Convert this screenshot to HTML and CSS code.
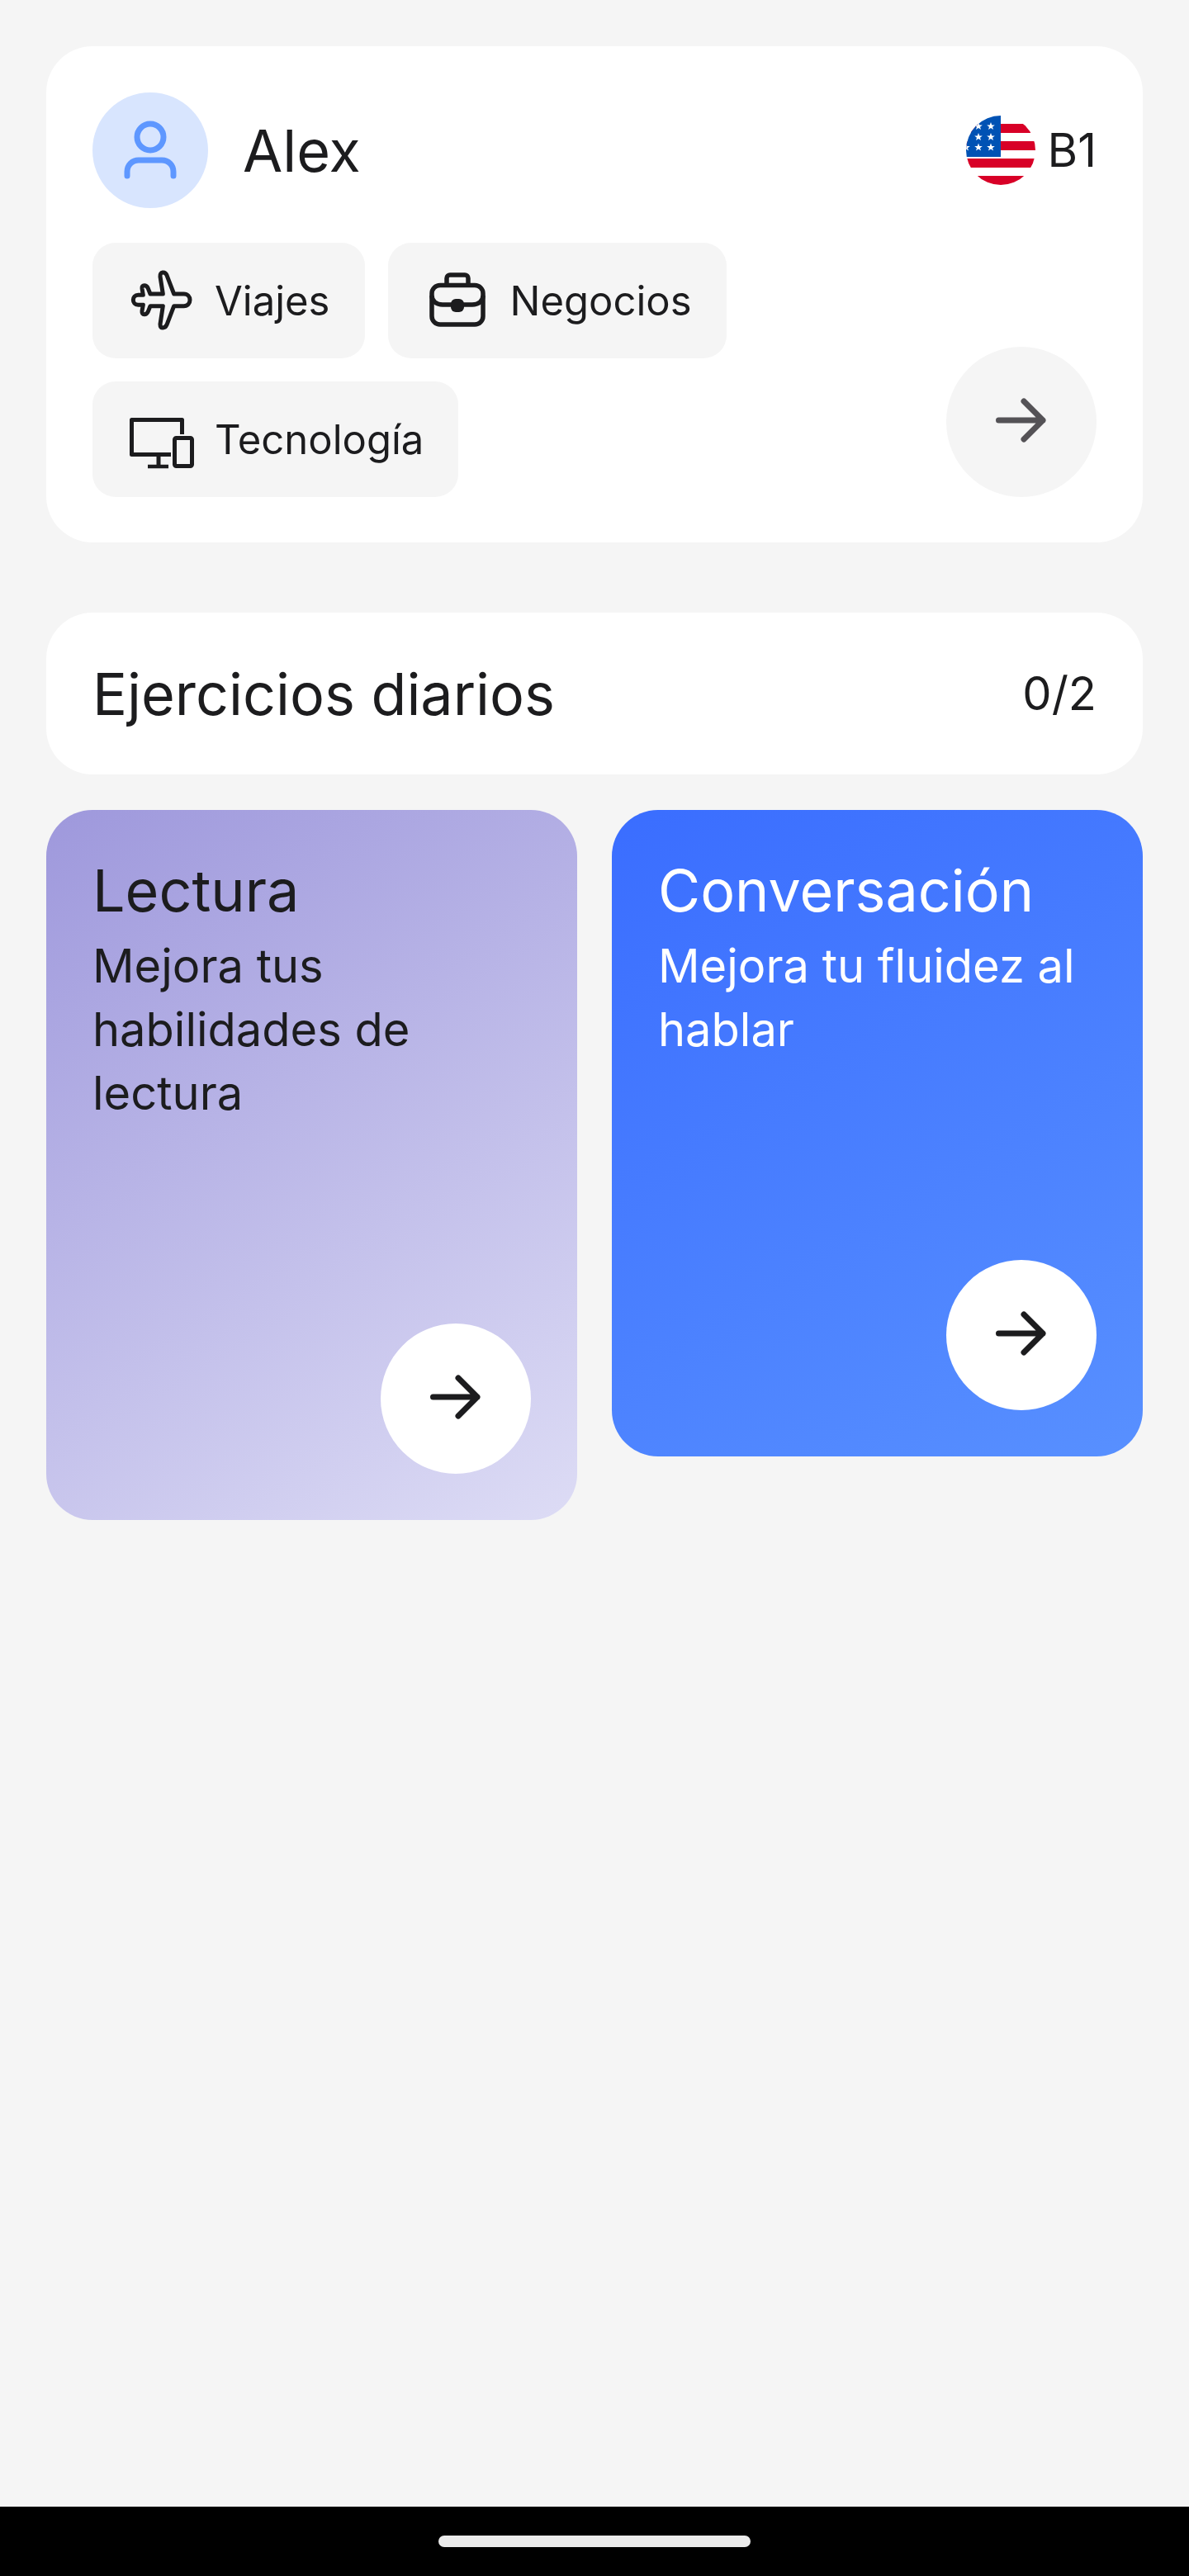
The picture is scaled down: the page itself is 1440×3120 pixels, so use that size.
FILE: index.html
```html
<!DOCTYPE html>
<html lang="es">
<head>
    <meta charset="UTF-8">
    <meta name="viewport" content="width=device-width, initial-scale=1.0">
    <title>Ejercicios diarios</title>
    <link rel="stylesheet" href="styles.css">
</head>
<body>
    <main class="content">
        <section class="card profile">
            <div class="profile-top">
                <div class="avatar">
                    <svg class="icon" viewBox="0 0 84 84" fill="none" stroke="#5e97ff" stroke-width="7" stroke-linecap="round">
                        <circle cx="42" cy="26" r="16"/>
                        <path d="M14 73V68C14 60 20 54 28 54H56C64 54 70 60 70 68V73"/>
                    </svg>
                </div>
                <span class="name">Alex</span>
                <div class="level">
                    <svg class="flag" viewBox="0 0 84 84">
                        <defs>
                            <clipPath id="flag-clip"><circle cx="42" cy="42" r="42"/></clipPath>
                            <polygon id="star" points="0,-5 1.3,-1.6 4.8,-1.5 2,0.7 3,4.1 0,2.1 -3,4.1 -2,0.7 -4.8,-1.5 -1.3,-1.6" fill="#fff"/>
                        </defs>
                        <g clip-path="url(#flag-clip)">
                            <rect width="84" height="84" fill="#fff"/>
                            <rect y="10" width="84" height="11" fill="#d80027"/>
                            <rect y="31" width="84" height="11" fill="#d80027"/>
                            <rect y="52" width="84" height="11" fill="#d80027"/>
                            <rect y="73" width="84" height="11" fill="#d80027"/>
                            <rect width="42" height="50" fill="#0052b4"/>
                            <use href="#star" x="15" y="13"/>
                            <use href="#star" x="30" y="13"/>
                            <use href="#star" x="15" y="26"/>
                            <use href="#star" x="30" y="26"/>
                            <use href="#star" x="0" y="38.5"/>
                            <use href="#star" x="15" y="38.5"/>
                            <use href="#star" x="30" y="38.5"/>
                        </g>
                    </svg>
                    <span class="level-text">B1</span>
                </div>
            </div>
            <div class="profile-bottom">
                <div class="chips">
                    <div class="chip">
                        <svg class="icon" viewBox="198 126 252 252" fill="none" stroke="#1c1c1e" stroke-width="15" stroke-linejoin="round">
                            <path d="M398 228C412 228 420 238 420 250C420 262 412 272 398 272L362 272L336 340C330 354 312 356 312 338L322 272L276 272L268 292C262 306 244 306 246 290L250 268L232 268C208 268 208 232 232 232L250 232L246 208C244 194 262 194 268 208L276 228L322 228L312 165C310 146 330 146 336 160L362 228Z"/>
                        </svg>
                        <span>Viajes</span>
                    </div>
                    <div class="chip">
                        <svg class="icon" viewBox="0 0 84 84" fill="none" stroke="#1c1c1e" stroke-width="5.5">
                            <rect x="9" y="23.5" width="62" height="47.5" rx="10"/>
                            <path d="M27 23V15C27 12.5 29 11 31 11H49C51 11 53 12.5 53 15V23"/>
                            <path d="M9 36C9 43 15 47 22 47H58C65 47 71 43 71 36"/>
                            <rect x="32" y="40" width="16" height="16" rx="6" fill="#1c1c1e" stroke="none"/>
                        </svg>
                        <span>Negocios</span>
                    </div>
                    <div class="chip">
                        <svg class="icon" viewBox="0 0 84 84" fill="none" stroke="#1c1c1e" stroke-width="5" stroke-linejoin="round">
                            <path d="M51 60.5H3.5V18.5H64.5V36"/>
                            <path d="M36 61V73"/>
                            <path d="M23 75H48" stroke-width="4.5"/>
                            <rect x="55.5" y="40.5" width="21" height="34" rx="2"/>
                        </svg>
                        <span>Tecnología</span>
                    </div>
                </div>
                <button class="arrow-btn arrow-btn-muted">
                    <svg class="icon" viewBox="0 0 84 84" fill="none" stroke="#545256" stroke-width="7" stroke-linecap="round" stroke-linejoin="round">
                        <path d="M14.5 40H68M45 17L68 40L45 63"/>
                    </svg>
                </button>
            </div>
        </section>

        <section class="card daily">
            <h2 class="daily-title">Ejercicios diarios</h2>
            <span class="daily-count">0/2</span>
        </section>

        <div class="exercises">
            <article class="exercise exercise-reading">
                <h3 class="exercise-title">Lectura</h3>
                <p class="exercise-text">Mejora tus habilidades de lectura</p>
                <button class="arrow-btn">
                    <svg class="icon" viewBox="0 0 84 84" fill="none" stroke="#1c1c1e" stroke-width="7" stroke-linecap="round" stroke-linejoin="round">
                        <path d="M14.5 40H68M45 17L68 40L45 63"/>
                    </svg>
                </button>
            </article>
            <article class="exercise exercise-talking">
                <h3 class="exercise-title">Conversación</h3>
                <p class="exercise-text">Mejora tu fluidez al hablar</p>
                <button class="arrow-btn">
                    <svg class="icon" viewBox="0 0 84 84" fill="none" stroke="#1c1c1e" stroke-width="7" stroke-linecap="round" stroke-linejoin="round">
                        <path d="M14.5 40H68M45 17L68 40L45 63"/>
                    </svg>
                </button>
            </article>
        </div>
    </main>

    <div class="nav-bar">
        <div class="nav-handle"></div>
    </div>
</body>
</html>
```

FILE: styles.css
```css
body {
    font-family: Inter, "Liberation Sans", sans-serif;
    background-color: #f5f5f5;
    color: #1c1c1e;
    margin: 0;
    height: 3120px;
    display: flex;
    flex-direction: column;
}

.content {
    flex: 1;
    padding: 56px 56px 0;
}

.card {
    background-color: #fff;
    border-radius: 56px;
}

.icon {
    width: 84px;
    height: 84px;
    flex-shrink: 0;
}

.profile {
    padding: 56px;
    height: 601px;
    box-sizing: border-box;
}

.profile-top {
    display: flex;
    align-items: center;
}

.avatar {
    width: 140px;
    height: 140px;
    border-radius: 50%;
    background-color: #d8e5fe;
    display: flex;
    align-items: center;
    justify-content: center;
}

.name {
    font-size: 70px;
    margin-left: 42px;
    flex: 1;
}

.level {
    display: flex;
    align-items: center;
    gap: 15px;
}

.flag {
    width: 84px;
    height: 84px;
}

.level-text {
    font-size: 56px;
}

.profile-bottom {
    display: flex;
    align-items: flex-end;
    margin-top: 42px;
}

.chips {
    flex: 1;
    display: flex;
    flex-wrap: wrap;
    gap: 28px;
}

.chip {
    height: 140px;
    box-sizing: border-box;
    padding: 0 42px 0 44px;
    background-color: #f5f5f5;
    border-radius: 28px;
    display: flex;
    align-items: center;
    gap: 20px;
    font-size: 49px;
}

.arrow-btn {
    width: 182px;
    height: 182px;
    flex-shrink: 0;
    padding: 0;
    border: none;
    border-radius: 50%;
    background-color: #fff;
    display: flex;
    align-items: center;
    justify-content: center;
}

.arrow-btn-muted {
    background-color: #f5f5f5;
}

.daily {
    margin-top: 85px;
    height: 196px;
    padding: 0 56px;
    display: flex;
    align-items: center;
    justify-content: space-between;
}

.daily-title {
    font-size: 70px;
    font-weight: 400;
    margin: 0;
}

.daily-count {
    font-size: 56px;
}

.exercises {
    margin-top: 43px;
    display: grid;
    grid-template-columns: 643px 643px;
    gap: 42px;
    align-items: start;
}

.exercise {
    padding: 56px;
    border-radius: 56px;
    display: flex;
    flex-direction: column;
}

.exercise-reading {
    background: linear-gradient(148deg, #9e98dc 0%, #dddcf5 100%);
}

.exercise-talking {
    background: linear-gradient(148deg, #3a6dff 0%, #5890ff 100%);
    color: #fff;
}

.exercise-title {
    font-size: 70px;
    font-weight: 400;
    line-height: 84px;
    margin: 0;
}

.exercise-text {
    font-size: 56px;
    line-height: 77px;
    margin: 11px 0 0;
}

.exercise .arrow-btn {
    align-self: flex-end;
    margin-top: 240px;
}

.nav-bar {
    height: 84px;
    background-color: #000;
    display: flex;
    justify-content: center;
    padding-top: 35px;
    box-sizing: border-box;
}

.nav-handle {
    width: 378px;
    height: 14px;
    border-radius: 7px;
    background-color: #ebebeb;
}
```
